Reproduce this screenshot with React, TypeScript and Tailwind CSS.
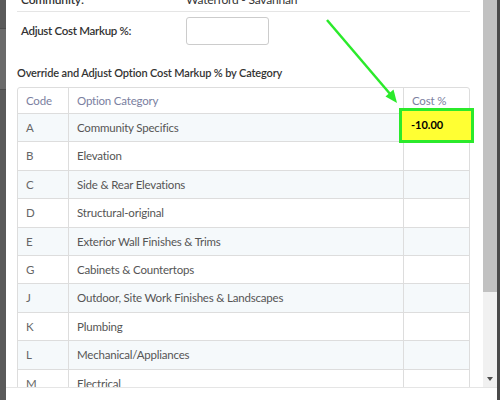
import React from 'react'

const rows = [
  ['A', 'Community Specifics'],
  ['B', 'Elevation'],
  ['C', 'Side & Rear Elevations'],
  ['D', 'Structural-original'],
  ['E', 'Exterior Wall Finishes & Trims'],
  ['G', 'Cabinets & Countertops'],
  ['J', 'Outdoor, Site Work Finishes & Landscapes'],
  ['K', 'Plumbing'],
  ['L', 'Mechanical/Appliances'],
  ['M', 'Electrical'],
]

export default function App() {
  return (
    <div
      className="relative w-[500px] h-[400px] overflow-hidden flex bg-[#575757] text-[#333]"
      style={{ fontFamily: 'Lato, "Open Sans", sans-serif' }}
    >
      {/* backdrop strip on the left */}
      <div className="w-[6px] shrink-0 flex flex-col">
        <div className="h-[28px] bg-[#5a5a5a]" />
        <div className="h-[62px] bg-[#6a6a6a] border-y border-[#4d4d4d]" />
        <div className="flex-1 bg-[#5a5a5a]" />
      </div>

      {/* modal */}
      <div className="flex-1 flex flex-col bg-white">
        <div className="flex-1 flex min-h-0">
          <div className="flex-1 overflow-hidden pl-[11px] pr-[13px]">
            <div className="mt-[-12px]">
              <div className="flex items-center h-[24px] border-b border-[#e5e5e5] text-[12px] tracking-[-0.2px]">
                <span className="w-[169px] pl-[4px] font-semibold">Community:</span>
                <span>Waterford - Savannah</span>
              </div>
              <div className="flex items-center h-[38px] text-[11.5px] tracking-[-0.3px]">
                <span className="w-[169px] pl-[4px] font-semibold">Adjust Cost Markup %:</span>
                <div className="w-[83px] h-[28px] rounded-[3px] border border-[#cccccc] bg-white" />
              </div>
              <div className="pt-[16px] pb-[7px] text-[11px] tracking-[-0.15px] font-semibold leading-[14px]">
                Override and Adjust Option Cost Markup % by Category
              </div>
              <div className="border border-[#dddddd] rounded-t-[3px] text-[11.5px] tracking-[-0.2px]">
                <div className="flex h-[25px] items-center text-[#7b80a0]">
                  <div className="w-[50px] pl-[8px]">Code</div>
                  <div className="flex-1 pl-[8px] self-stretch flex items-center border-l border-[#dddddd]">Option Category</div>
                  <div className="w-[66px] pl-[8px] self-stretch flex items-center border-l border-[#dddddd]">Cost %</div>
                </div>
                {rows.map(([code, name], i) => (
                  <div
                    key={code}
                    className={`flex h-[28.4px] items-center border-t border-[#dddddd] text-[#555] ${i % 2 === 0 ? 'bg-[#f5f9fb]' : 'bg-white'}`}
                  >
                    <div className="w-[50px] pl-[8px] text-[#666]">{code}</div>
                    <div className="flex-1 pl-[8px] self-stretch flex items-center border-l border-[#dddddd]">{name}</div>
                    <div className="w-[66px] self-stretch border-l border-[#dddddd]" />
                  </div>
                ))}
              </div>
            </div>
          </div>
          {/* scrollbar */}
          <div className="w-[14px] shrink-0 flex flex-col bg-[#f1f1f1]">
            <div className="h-[292px] bg-[#c1c1c1]" />
            <div className="flex-1 flex items-end justify-center pb-[6px]">
              <div className="w-0 h-0 border-x-[3.5px] border-x-transparent border-t-[4px] border-t-[#505050]" />
            </div>
          </div>
        </div>
        <div className="h-[13px] shrink-0 border-t border-[#e5e5e5] bg-white" />
      </div>

      <div className="w-[3px] shrink-0 bg-[#4a4a4a]" />

      {/* annotation: highlighted cell */}
      <div className="absolute left-[399px] top-[108px] w-[75px] h-[35px] border-[3px] border-[#2bea2b] bg-[#ffff33] flex items-center pl-[9px] text-[11px] font-bold text-black">
        -10.00
      </div>

      {/* annotation: arrow */}
      <svg className="absolute left-0 top-0 pointer-events-none" width="500" height="400">
        <line x1="327" y1="20" x2="391" y2="95" stroke="#2bea2b" strokeWidth="2.5" />
        <polygon points="397,103 385.5,96.5 393.5,89.5" fill="#2bea2b" />
      </svg>
    </div>
  )
}
